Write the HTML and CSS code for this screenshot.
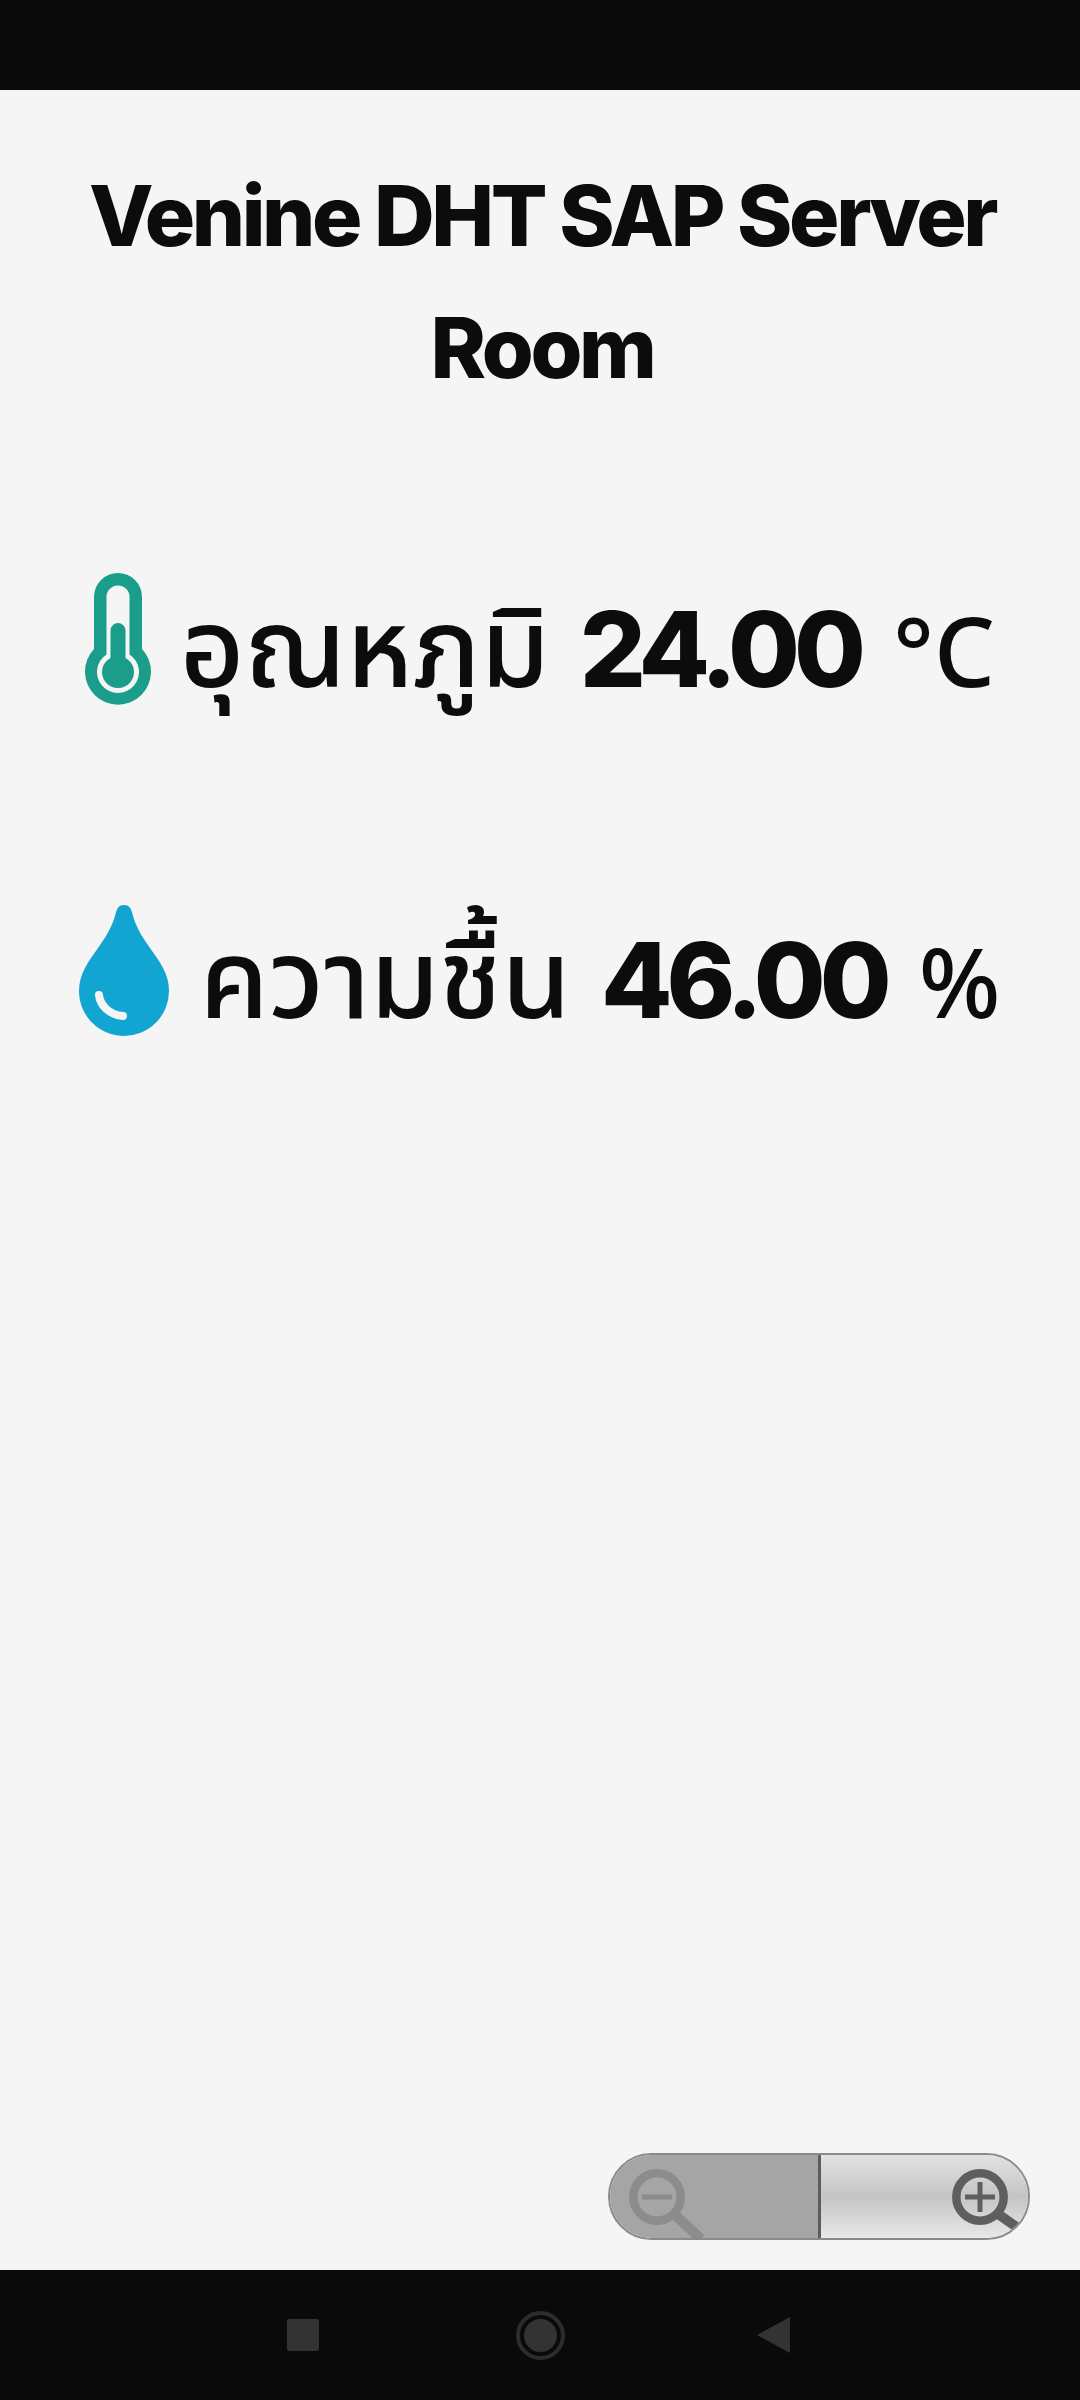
FILE: index.html
```html
<!DOCTYPE html>
<html lang="th">
<head>
    <meta charset="UTF-8">
    <meta name="viewport" content="width=device-width, initial-scale=1.0">
    <title>Venine DHT SAP Server Room</title>
    <link rel="stylesheet" href="styles.css">
</head>
<body>
    <div class="status-bar"></div>

    <main class="page">
        <h1>Venine DHT SAP Server Room</h1>

        <div class="reading reading-temp">
            <svg class="icon-temp" viewBox="0 0 66 132" aria-hidden="true">
                <path fill="#1a9e8b" fill-rule="evenodd" d="M9 24a24 24 0 0 1 48 0v52a33 33 0 1 1-48 0zM21.500 24v57.400a21 21 0 1 0 23 0V24a11.500 11.500 0 0 0-23 0z"/>
                <path fill="#1a9e8b" d="M25.500 57.500a7.500 7.500 0 0 1 15 0v27.400a16 16 0 1 1-15 0z"/>
            </svg>
            <div class="reading-text">
                <span class="label">อุณหภูมิ</span>
                <strong class="value">24.00</strong>
                <span class="unit">°C</span>
            </div>
        </div>

        <div class="reading reading-hum">
            <svg class="icon-hum" viewBox="0 0 90 131" aria-hidden="true">
                <path fill="#12a5d2" d="M45 0c5 0 7 3 8.500 9 3 12 9 22 17.500 34 10 14 19 26 19 43a45 45 0 0 1-90 0c0-17 9-29 19-43 8.500-12 14.500-22 17.500-34C38 3 40 0 45 0z"/>
                <path fill="none" stroke="#f5f5f5" stroke-width="8" stroke-linecap="round" d="M20 90c1 10 10 20 24 21"/>
            </svg>
            <div class="reading-text">
                <span class="label">ความชื้น</span>
                <strong class="value">46.00</strong>
                <span class="unit">%</span>
            </div>
        </div>

        <div class="zoom-control">
            <div class="zoom-btn zoom-out">
                <svg viewBox="0 0 90 80" width="90" height="80" aria-hidden="true">
                    <circle cx="34" cy="40" r="23.700" fill="none" stroke="#8c8c8c" stroke-width="8.500"/>
                    <path d="M19 40h30" stroke="#8c8c8c" stroke-width="5"/>
                    <path d="M52 58l26 24" stroke="#8c8c8c" stroke-width="10"/>
                </svg>
            </div>
            <div class="zoom-btn zoom-in">
                <svg viewBox="0 0 90 80" width="90" height="80" aria-hidden="true">
                    <circle cx="34" cy="40" r="23.700" fill="none" stroke="#5e5e5e" stroke-width="8.500"/>
                    <path d="M19 40h30M34 25v30" stroke="#5e5e5e" stroke-width="5"/>
                    <path d="M52 57l20 14" stroke="#5e5e5e" stroke-width="10"/>
                </svg>
            </div>
        </div>
    </main>

    <nav class="nav-bar">
        <span class="nav-square"></span>
        <span class="nav-circle"></span>
        <span class="nav-back"></span>
    </nav>
</body>
</html>
```

FILE: styles.css
```css
/* General body styling */
body {
    margin: 0;
    width: 1080px;
    height: 2400px;
    display: flex;
    flex-direction: column;
    overflow: hidden;
    background-color: #f5f5f5;
    color: #0c0c0c;
    font-family: Inter, "Noto Sans", sans-serif;
}

.status-bar {
    height: 90px;
    background-color: #0a0a0a;
}

/* Main content */
.page {
    position: relative;
    flex: 1;
    display: flex;
    flex-direction: column;
    align-items: center;
}

h1 {
    width: 960px;
    margin: 60px 0 0 4px;
    font-size: 84px;
    line-height: 132px;
    font-weight: 800;
    letter-spacing: -3.4px;
    text-align: center;
}

/* Sensor rows */
.reading {
    display: flex;
    align-items: center;
    white-space: nowrap;
}

.reading-temp {
    margin-top: 148px;
    gap: 29px;
}

.reading-hum {
    margin-top: 177px;
    gap: 30px;
}

.reading-text {
    display: flex;
    align-items: baseline;
    padding-top: 16px;
    font-size: 104px;
    line-height: 132px;
}

.label {
    font-family: "Noto Sans", "Noto Sans Thai", sans-serif;
    font-size: 111px;
    font-weight: 500;
}

.value {
    margin-left: 30px;
    font-weight: 800;
    letter-spacing: -6px;
}

.unit {
    margin-left: 33px;
    font-family: "Noto Sans", sans-serif;
    font-size: 96px;
    font-weight: 500;
}

.icon-temp {
    width: 66px;
    height: 132px;
}

.icon-hum {
    width: 90px;
    height: 131px;
}

/* Zoom buttons overlay */
.zoom-control {
    position: absolute;
    left: 608px;
    top: 2063px;
    width: 422px;
    height: 87px;
    display: flex;
    box-sizing: border-box;
    border: 2px solid #8a8a8a;
    border-radius: 44px;
    overflow: hidden;
}

.zoom-btn {
    display: flex;
    align-items: center;
}

.zoom-btn svg {
    flex-shrink: 0;
    overflow: visible;
}

.zoom-out {
    flex: 0 0 211px;
    background-color: #a5a5a5;
    border-right: 3px solid #5c5c5c;
    padding-left: 13px;
    box-sizing: border-box;
}

.zoom-in {
    flex: 1 1 0;
    min-width: 0;
    padding-left: 125px;
    background: linear-gradient(#e2e2e2, #c4c4c4 50%, #e8e8e8);
}

/* Navigation bar */
.nav-bar {
    height: 130px;
    display: flex;
    align-items: center;
    justify-content: center;
    padding-right: 3px;
    background-color: #0a0a0a;
}

.nav-square {
    width: 32px;
    height: 32px;
    background-color: #333;
    border-radius: 2px;
}

.nav-circle {
    box-sizing: border-box;
    width: 41px;
    height: 41px;
    margin: 0 196px 0 201px;
    border-radius: 50%;
    background-color: #333;
    border: 4px solid #0a0a0a;
    outline: 4px solid #2c2c2c;
}

.nav-back {
    width: 0;
    height: 0;
    border-style: solid;
    border-width: 18px 33px 18px 0;
    border-color: transparent #333 transparent transparent;
}
```
